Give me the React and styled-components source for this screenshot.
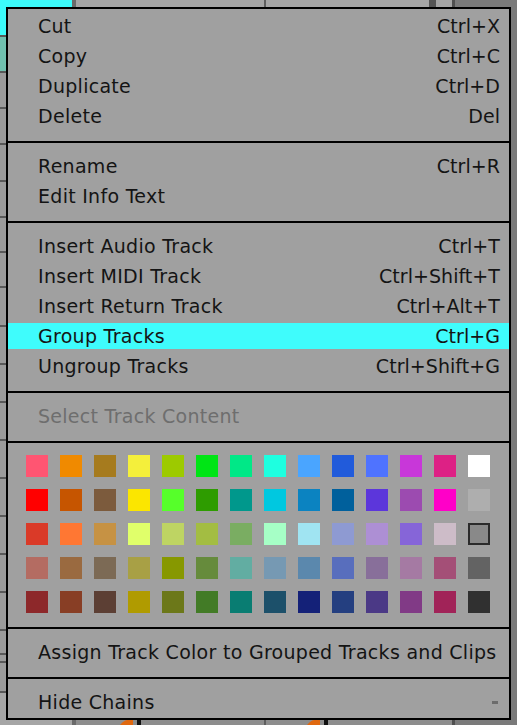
import React from "react";
import styled, { createGlobalStyle } from "styled-components";

const Global = createGlobalStyle`
  html, body { margin: 0; padding: 0; background: #8d8d8d; }
  body { font-family: "DejaVu Sans", "Liberation Sans", sans-serif; }
`;

const Page = styled.div`
  position: relative;
  width: 517px;
  height: 725px;
  overflow: hidden;
  display: flex;
  background: #8d8d8d;
`;

/* ---------- backdrop (Live session view, behind the menu) ---------- */
const LeftCol = styled.div`
  width: 72px;
  display: flex;
  flex-direction: column;
  background: #9a9a9a;
`;

const LeftCell = styled.div`
  height: ${(p) => p.$h || 34}px;
  flex: none;
  background: ${(p) => p.$bg || "#9a9a9a"};
  border-bottom: 2px solid #585858;
`;

const LeftFill = styled.div`
  flex: 1;
  background: #a6a6a6;
`;

const Gutter = styled.div`
  width: ${(p) => p.$w}px;
  flex: none;
  background: ${(p) => p.$bg};
`;

const TrackCol = styled.div`
  width: ${(p) => p.$w}px;
  flex: none;
  display: flex;
  flex-direction: column;
`;

const TrackHead = styled.div`
  height: 36px;
  background: #a5a5a5;
  display: flex;
  justify-content: flex-end;
  padding-right: 16px;
`;

const HeadMark = styled.div`
  width: 7px;
  height: 7px;
  background: #555;
`;

const TrackBody = styled.div`
  flex: 1;
  background: #8d8d8d;
  display: flex;
  align-items: flex-end;
  padding-left: ${(p) => p.$knob}px;
`;

const RightCol = styled.div`
  flex: 1;
  background: #7a7a7a;
`;

const Knob = () => (
  <svg width="30" height="7" viewBox="0 0 30 7">
    <path d="M0 7 Q4 1 13 1 L13 7 Z" fill="#e0680f" />
    <rect x="17" y="2" width="4" height="5" fill="#111" />
  </svg>
);

/* ---------- context menu ---------- */
const Menu = styled.div`
  position: absolute;
  left: 6px;
  top: 7px;
  width: 505px;
  box-sizing: border-box;
  border: 2px solid #000;
  background: #a0a0a0;
  font-family: "DejaVu Sans", "Liberation Sans", sans-serif;
  font-size: 19px;
  color: #141414;
`;

const Section = styled.div`
  display: flex;
  flex-direction: column;
  gap: 4px;
  padding-top: ${(p) => (p.$top != null ? p.$top : 10)}px;
  padding-bottom: ${(p) => (p.$bottom != null ? p.$bottom : 12)}px;
  & + & {
    border-top: 2px solid #000;
  }
`;

const Item = styled.div`
  height: 26px;
  line-height: 26px;
  display: flex;
  justify-content: space-between;
  align-items: center;
  padding: 0 9px 0 30px;
  white-space: nowrap;
  background: ${(p) => (p.$active ? "#3ffcfc" : "transparent")};
  color: ${(p) => (p.$disabled ? "#6e6e6e" : "#141414")};
`;

const Label = styled.span`
  letter-spacing: 0.28px;
`;

const Shortcut = styled.span`
  letter-spacing: 0.05px;
  color: #141414;
`;

const Dash = styled.span`
  width: 6px;
  height: 3px;
  margin-right: 2px;
  margin-top: 1px;
  background: #6c6c6c;
`;

const SwatchGrid = styled.div`
  display: grid;
  grid-template-columns: repeat(14, 22px);
  grid-auto-rows: 22px;
  gap: 12px;
  padding: 0 18px;
`;

const Swatch = styled.div`
  box-sizing: border-box;
  background: ${(p) => p.$c};
  border: ${(p) => (p.$selected ? "2px solid #2b2b2b" : "none")};
`;

const palette = [
  ["#ff5572", "#f08a00", "#a67b1e", "#f4ef3b", "#9dca00", "#00e515", "#00e887", "#1effe0", "#4aa5ff", "#215bdb", "#4f73ff", "#c837d9", "#dd2185", "#ffffff"],
  ["#ff0000", "#c65500", "#7c5b3d", "#fbe600", "#56ff2a", "#2e9c00", "#00988c", "#00c8e0", "#0b83c1", "#00609c", "#5c36db", "#9c4bb0", "#ff00c8", "#aeaeae"],
  ["#da3a28", "#ff7733", "#c69244", "#e0ff6a", "#bed463", "#a3bd42", "#7aad62", "#a6ffc6", "#a0e4f2", "#8e9ad2", "#ad8fd4", "#8665d8", "#cdbcc8", "#898989"],
  ["#b46c62", "#9a6a40", "#7c6a55", "#a8a045", "#879800", "#668b3c", "#62ada2", "#7699b3", "#5b88ad", "#586ebd", "#886f9a", "#a57aa3", "#a44f77", "#636363"],
  ["#8d282a", "#883e25", "#5c3f34", "#b09b00", "#6c7819", "#427b26", "#097d72", "#1c506a", "#142178", "#243f80", "#4b3986", "#813a86", "#a12358", "#303030"],
];

const sections = [
  {
    top: 4,
    items: [
      ["Cut", "Ctrl+X"],
      ["Copy", "Ctrl+C"],
      ["Duplicate", "Ctrl+D"],
      ["Delete", "Del"],
    ],
  },
  {
    items: [
      ["Rename", "Ctrl+R"],
      ["Edit Info Text", ""],
    ],
  },
  {
    items: [
      ["Insert Audio Track", "Ctrl+T"],
      ["Insert MIDI Track", "Ctrl+Shift+T"],
      ["Insert Return Track", "Ctrl+Alt+T"],
      ["Group Tracks", "Ctrl+G", true],
      ["Ungroup Tracks", "Ctrl+Shift+G"],
    ],
  },
];

export default function App() {
  return (
    <>
      <Global />
      <Page>
        <LeftCol>
          <LeftCell $h={35} $bg="#3cfbfb" />
          <LeftCell $h={34} $bg="#70c0af" />
          <LeftCell $h={34} />
          <LeftCell $h={34} />
          <LeftCell $h={35} />
          <LeftCell $h={34} />
          <LeftCell $h={33} />
          <LeftCell $h={33} />
          <LeftCell $h={37} />
          <LeftCell $h={36} />
          <LeftCell $h={36} />
          <LeftCell $h={36} />
          <LeftCell $h={36} />
          <LeftCell $h={36} />
          <LeftCell $h={36} />
          <LeftCell $h={36} />
          <LeftCell $h={36} />
          <LeftCell $h={22} />
          <LeftCell $h={6} />
          <LeftCell $h={28} />
          <LeftFill />
        </LeftCol>
        <Gutter $w={4} $bg="#6a6a6a" />
        <TrackCol $w={188}>
          <TrackHead />
          <TrackBody $knob={44}>
            <Knob />
          </TrackBody>
        </TrackCol>
        <Gutter $w={2} $bg="#5e5e5e" />
        <TrackCol $w={186}>
          <TrackHead>
            <HeadMark />
          </TrackHead>
          <TrackBody $knob={41}>
            <Knob />
          </TrackBody>
        </TrackCol>
        <Gutter $w={3} $bg="#505050" />
        <RightCol />

        <Menu>
          {sections.map((s, si) => (
            <Section key={si} $top={s.top}>
              {s.items.map(([label, sc, active]) => (
                <Item key={label} $active={active}>
                  <Label>{label}</Label>
                  {sc && <Shortcut>{sc}</Shortcut>}
                </Item>
              ))}
            </Section>
          ))}
          <Section>
            <Item $disabled>
              <Label>Select Track Content</Label>
            </Item>
          </Section>
          <Section $top={12} $bottom={14}>
            <SwatchGrid>
              {palette.flatMap((row, ri) =>
                row.map((c, ci) => (
                  <Swatch key={`${ri}-${ci}`} $c={c} $selected={ri === 2 && ci === 13} />
                ))
              )}
            </SwatchGrid>
          </Section>
          <Section>
            <Item>
              <Label>Assign Track Color to Grouped Tracks and Clips</Label>
            </Item>
          </Section>
          <Section $bottom={3}>
            <Item>
              <Label>Hide Chains</Label>
              <Dash />
            </Item>
          </Section>
        </Menu>
      </Page>
    </>
  );
}
